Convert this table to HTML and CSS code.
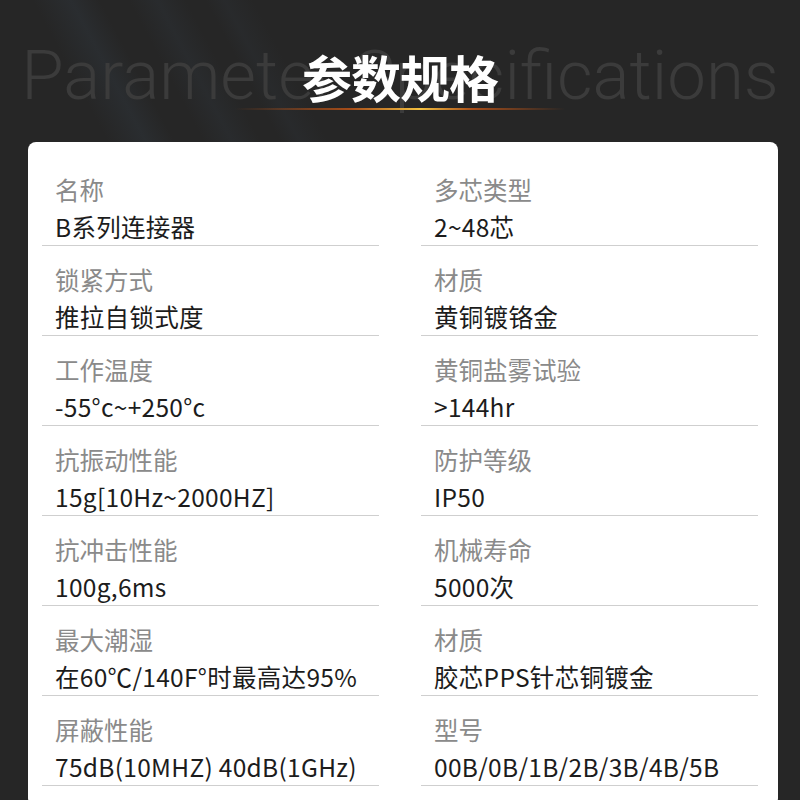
FILE: index.html
```
<!DOCTYPE html>
<html lang="zh-CN">
<head>
    <meta charset="UTF-8">
    <meta name="viewport" content="width=device-width, initial-scale=1.0">
    <title>参数规格</title>
    <link rel="stylesheet" href="styles.css">
</head>
<body>
    <div class="header">
        <div class="bg-title">Parameter Specifications</div>
        <div class="title-wrap">
            <h1 class="title">参数规格</h1>
            <div class="title-line"></div>
        </div>
    </div>

    <div class="card">
        <div class="spec-grid">
            <div class="item"><div class="label">名称</div><div class="value">B系列连接器</div></div>
            <div class="item"><div class="label">多芯类型</div><div class="value">2~48芯</div></div>

            <div class="item"><div class="label">锁紧方式</div><div class="value">推拉自锁式度</div></div>
            <div class="item"><div class="label">材质</div><div class="value">黄铜镀铬金</div></div>

            <div class="item"><div class="label">工作温度</div><div class="value">-55°c~+250°c</div></div>
            <div class="item"><div class="label">黄铜盐雾试验</div><div class="value">&gt;144hr</div></div>

            <div class="item"><div class="label">抗振动性能</div><div class="value">15g[10Hz~2000HZ]</div></div>
            <div class="item"><div class="label">防护等级</div><div class="value">IP50</div></div>

            <div class="item"><div class="label">抗冲击性能</div><div class="value">100g,6ms</div></div>
            <div class="item"><div class="label">机械寿命</div><div class="value">5000次</div></div>

            <div class="item"><div class="label">最大潮湿</div><div class="value">在60℃/140F°时最高达95%</div></div>
            <div class="item"><div class="label">材质</div><div class="value">胶芯PPS针芯铜镀金</div></div>

            <div class="item"><div class="label">屏蔽性能</div><div class="value">75dB(10MHZ) 40dB(1GHz)</div></div>
            <div class="item"><div class="label">型号</div><div class="value">00B/0B/1B/2B/3B/4B/5B</div></div>
        </div>
    </div>
</body>
</html>
```

FILE: styles.css
```
body {
    margin: 0;
    padding: 0;
    font-family: "Noto Sans CJK SC", "Noto Sans", sans-serif;
    background-color: #262626;
    background-image:
        linear-gradient(62deg, transparent 20%, rgba(70, 95, 120, 0.12) 24%, transparent 27%),
        linear-gradient(62deg, transparent 30%, rgba(70, 95, 120, 0.09) 33%, transparent 36%),
        linear-gradient(62deg, transparent 38%, rgba(70, 95, 120, 0.07) 40%, transparent 43%);
    background-size: 800px 300px;
    background-repeat: no-repeat;
    height: 800px;
    overflow: hidden;
}
.header {
    height: 142px;
    display: grid;
    place-items: center;
}
.bg-title,
.title-wrap {
    grid-area: 1 / 1;
}
.bg-title {
    font-family: Roboto, "Liberation Sans", sans-serif;
    font-weight: 300;
    font-size: 69px;
    color: #3b3b3b;
    white-space: nowrap;
    margin-top: 8px;
}
.title-wrap {
    display: flex;
    flex-direction: column;
    align-items: center;
    margin-top: 16px;
}
.title {
    margin: 0;
    font-size: 50px;
    font-weight: 700;
    color: #fff;
    line-height: 56px;
    letter-spacing: -1px;
}
.title-line {
    width: 330px;
    height: 2px;
    margin-top: 4px;
    background: linear-gradient(90deg, rgba(200, 80, 20, 0) 0%, rgba(210, 90, 20, 0.75) 35%, #f3c040 56%, rgba(210, 90, 20, 0.75) 72%, rgba(200, 80, 20, 0) 100%);
}
.card {
    margin: 0 22px 0 28px;
    background-color: #fff;
    border-radius: 8px;
    padding: 14px 20px 20px 14px;
}
.spec-grid {
    display: grid;
    grid-template-columns: 1fr 1fr;
    column-gap: 42px;
}
.item {
    padding: 17px 0 1px 13px;
    border-bottom: 1px solid #cfcfcf;
}
.label {
    font-size: 24.5px;
    line-height: 34px;
    color: #8a8a8a;
}
.value {
    font-size: 24.5px;
    line-height: 34px;
    margin-top: 3px;
    color: #1c1c1c;
    letter-spacing: 0.3px;
    white-space: nowrap;
}
```
